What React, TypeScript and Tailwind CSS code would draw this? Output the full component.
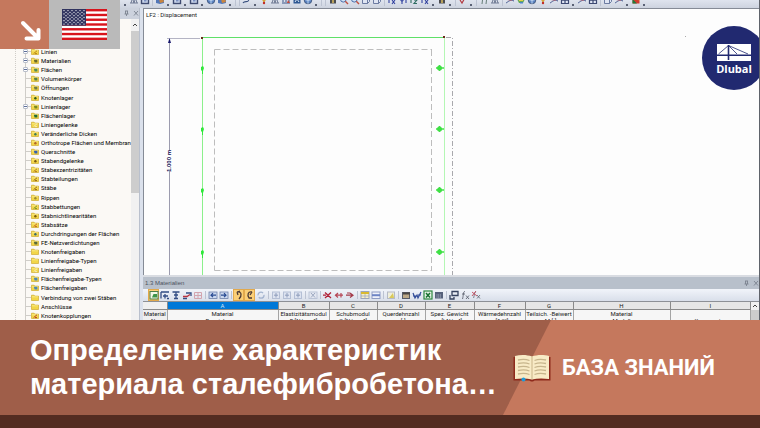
import type { ReactNode } from "react";

type TreeItem = { label: string; mark: string; kind: "dot" | "slash" | "block" | "none"; open?: boolean };

const tree: TreeItem[] = [
  { label: "Linien", mark: "#b07a10", kind: "slash", open: true },
  { label: "Materialien", mark: "#6a6a2a", kind: "block", open: true },
  { label: "Flächen", mark: "#4f8a58", kind: "block", open: true },
  { label: "Volumenkörper", mark: "#55804a", kind: "block" },
  { label: "Öffnungen", mark: "#6c7a4a", kind: "block" },
  { label: "Knotenlager", mark: "#2c5a1c", kind: "dot" },
  { label: "Linienlager", mark: "#7a8a20", kind: "block", open: true },
  { label: "Flächenlager", mark: "#1f6a36", kind: "block" },
  { label: "Liniengelenke", mark: "#f6efc0", kind: "slash" },
  { label: "Veränderliche Dicken", mark: "#3e7a5a", kind: "dot" },
  { label: "Orthotrope Flächen und Membran", mark: "#b0642a", kind: "dot" },
  { label: "Querschnitte", mark: "#3560b0", kind: "block" },
  { label: "Stabendgelenke", mark: "#7a5a10", kind: "dot" },
  { label: "Stabexzentrizitäten", mark: "#a8701c", kind: "slash" },
  { label: "Stabteilungen", mark: "#8a5a10", kind: "slash" },
  { label: "Stäbe", mark: "#8a5a10", kind: "slash" },
  { label: "Rippen", mark: "#9a8a30", kind: "dot" },
  { label: "Stabbettungen", mark: "#6a8a20", kind: "slash" },
  { label: "Stabnichtlinearitäten", mark: "#7a5a10", kind: "dot" },
  { label: "Stabsätze", mark: "#c05a1c", kind: "slash" },
  { label: "Durchdringungen der Flächen", mark: "#3a6a6a", kind: "dot" },
  { label: "FE-Netzverdichtungen", mark: "#5a6a3a", kind: "block" },
  { label: "Knotenfreigaben", mark: "", kind: "none" },
  { label: "Linienfreigabe-Typen", mark: "", kind: "none" },
  { label: "Linienfreigaben", mark: "#f6efc0", kind: "slash" },
  { label: "Flächenfreigabe-Typen", mark: "#4a86b8", kind: "block" },
  { label: "Flächenfreigaben", mark: "#4a86b8", kind: "block" },
  { label: "Verbindung von zwei Stäben", mark: "", kind: "none" },
  { label: "Anschlüsse", mark: "", kind: "none" },
  { label: "Knotenkopplungen", mark: "#b0301c", kind: "slash" },
];

function Folder({ item }: { item: TreeItem }) {
  return (
    <svg viewBox="0 0 8 7" className="h-[7px] w-[8px] shrink-0" aria-hidden="true">
      <path d="M.5 1.2h2.6l.8.9h3.6v4.4h-7z" fill="#f2d648" stroke="#c9a21e" strokeWidth=".6" />
      <path d="M1 2.8h6" stroke="#fff3a0" strokeWidth=".7" />
      {item.kind === "dot" && <circle cx="4.4" cy="4.2" r="1.2" fill={item.mark} />}
      {item.kind === "block" && <path d="M2.8 2.7h3.6v2.9H3.6z" fill={item.mark} />}
      {item.kind === "slash" && <path d="M2.6 5.6 6 2.8M4 5.6h2" stroke={item.mark} strokeWidth=".9" />}
    </svg>
  );
}

const glyphs: Record<string, ReactNode> = {
  layers: (
    <>
      <path d="M1 5l4-3 4 2v4l-4 1-4-1z" fill="#5277b8" />
      <path d="M4 4h4l1 3-4 1z" fill="#c9853f" />
    </>
  ),
  frame: (
    <>
      <rect x="1.5" y="1.5" width="7" height="7" fill="#c9d4ea" stroke="#3e4a70" strokeWidth="1.4" />
      <rect x="4" y="4" width="2.5" height="2.5" fill="#7b8fc0" />
    </>
  ),
  globe: (
    <>
      <circle cx="5" cy="5" r="3.8" fill="#5d85c4" stroke="#34496f" strokeWidth=".8" />
      <path d="M2 4.5c2 1 4 1 6 0M5 1.2v7.6" stroke="#d2e4f8" strokeWidth=".8" fill="none" />
    </>
  ),
  curve: <path d="M1 8c2-3 6 1 6-5M7 2v3" stroke="#38507e" strokeWidth="1.2" fill="none" />,
  pin: (
    <>
      <path d="M2 3h6L5 8z" fill="#d6a63c" />
      <circle cx="5" cy="8" r="1.2" fill="#c02a25" />
    </>
  ),
  truss: <path d="M1 8h8M2 8l1.5-5L5 8l1.5-5L8 8M3.5 3h3" stroke="#68738d" strokeWidth=".9" fill="none" />,
  load: (
    <>
      <path d="M1 8h8M2 2v5M5 2v5M8 2v5" stroke="#3d5789" strokeWidth="1" />
      <path d="M7 5l2 3H6z" fill="#c44a3d" />
    </>
  ),
  solid: (
    <>
      <rect x="1.5" y="2" width="7" height="6.5" fill="#2f5893" />
      <path d="M3 7l2-3 2 3" stroke="#e2edf8" fill="none" />
    </>
  ),
  zoom: (
    <>
      <circle cx="4.3" cy="4.3" r="2.8" fill="#cfe0f3" stroke="#4a6fab" strokeWidth="1" />
      <path d="M6.3 6.3 9 9" stroke="#c05040" strokeWidth="1.4" />
    </>
  ),
  cube: <path d="M1.5 3.5h5v5h-5zM1.5 3.5 3.5 1.5h5v5l-2 2M6.5 3.5l2-2" fill="#dfe5f3" stroke="#5f6f98" strokeWidth=".9" />,
  axisX: <path d="M2 1v7M5 5l3 4M8 5 5 9" stroke="#3444a0" strokeWidth="1.1" />,
  axisY: <path d="M2 4l2 2.5L6 4M4 6.5V9M8 1v7" stroke="#3444a0" strokeWidth="1.1" fill="none" />,
  axisZ: <path d="M2 1v7M5 5h3L5 8.5h3" stroke="#2f6d62" strokeWidth="1.1" fill="none" />,
  person: (
    <>
      <path d="M2 8.5V4l3-2 3 2v4.5z" fill="#4a4c50" />
      <path d="M4 8h2V5H4z" fill="#b7a05b" />
    </>
  ),
  check: <path d="M2 5l2 3 4-7" stroke="#b23b42" strokeWidth="1.2" fill="none" />,
  bars: <path d="M3 9 4 1M7 9 8 1" stroke="#667d78" strokeWidth="1" />,
  result: (
    <>
      <path d="M1 8c2-1 4-4 8-2" stroke="#40548c" fill="none" />
      <path d="M2 5l3-3 2 4z" fill="#c5646a" opacity=".8" />
    </>
  ),
  rainbow: (
    <>
      <path d="M1 4c2-3 6-3 8 0L7 8H3z" fill="#64aa5a" />
      <path d="M3 4h4v2H3z" fill="#e7cf4e" />
      <path d="M4 7h3v1.5H4z" fill="#4e84c8" />
    </>
  ),
  mesh: <path d="M1.5 2h7v6.5h-7zM5 2v6.5M1.5 5.2h7" fill="#dfe5f3" stroke="#3d4972" strokeWidth="1.2" />,
  colour: (
    <>
      <path d="M1.5 1.5h7v7h-7z" fill="#d23b2e" />
      <path d="M1.5 4l4.5 4.5H1.5z" fill="#1f7c3b" />
      <path d="M5 2h3.5v4z" fill="#f0d23a" />
    </>
  ),
  sheet: (
    <>
      <rect x="1" y="1.5" width="8" height="7.5" fill="#f3f8e8" stroke="#4b7f49" />
      <path d="M3 7.5 4.5 4H8v3.5z" fill="#3d9549" />
    </>
  ),
  tableNew: <path d="M1 2h8M1 2v6.5M5 4v4.5M3 6h5M7 8.5h2" stroke="#334d84" strokeWidth="1.3" fill="none" />,
  tableCol: <path d="M1.5 2h7M5 2v6.5M3 8.5h4M3 5h4" stroke="#334d84" strokeWidth="1.3" fill="none" />,
  tableRed: (
    <>
      <path d="M4 3h5v3M1 8.5h4" stroke="#334d84" strokeWidth="1.3" fill="none" />
      <path d="M1 6.5h4l3-2" stroke="#b8323f" strokeWidth="1.3" fill="none" />
    </>
  ),
  tableFaded: <path d="M1.5 2.5h7v6h-7zM5 2.5v6M1.5 5.5h7" stroke="#d3a4ae" fill="none" />,
  left: (
    <>
      <rect x="1" y="2" width="8" height="6.5" fill="#cbd8ee" stroke="#6d80aa" strokeWidth=".8" />
      <path d="M8 5.2H3M5 3.2l-2 2 2 2" stroke="#294b92" strokeWidth="1.2" fill="none" />
    </>
  ),
  right: (
    <>
      <rect x="1" y="2" width="8" height="6.5" fill="#cbd8ee" stroke="#6d80aa" strokeWidth=".8" />
      <path d="M2 5.2h5M5 3.2l2 2-2 2" stroke="#294b92" strokeWidth="1.2" fill="none" />
    </>
  ),
  undo: <path d="M3 2c5-1 5 4 2 7M3 2l1 3M3 2l3-1" stroke="#4c3a35" strokeWidth="1.3" fill="none" />,
  redo: <path d="M7 2C3 1 2 5 4 8h3M7 2 5 5" stroke="#4c3a35" strokeWidth="1.3" fill="none" />,
  cycle: <circle cx="5" cy="5.2" r="3" fill="none" stroke="#a4b4cf" strokeWidth="1.3" strokeDasharray="7 2" />,
  faded: (
    <>
      <rect x="1.5" y="2" width="7" height="6.5" fill="#dde3f0" stroke="#b4bfd5" />
      <path d="M5 3v4.5M3 5.2h4" stroke="#8f9dbb" />
    </>
  ),
  fadedX: (
    <>
      <rect x="1" y="2" width="8" height="6.5" fill="#e3e7f1" stroke="#bcc5d8" />
      <path d="M3 3l4 4.5M7 3 3 7.5" stroke="#9ca8c0" />
    </>
  ),
  cut: <path d="M2 2.5l6 5.5M8 2.5 2 8M0 5.2h3" stroke="#b01f35" strokeWidth="1.3" />,
  rowOut: <path d="M1 5.2h8M4 3 1.5 5.2 4 7.5M7 3v4.5" stroke="#b64655" strokeWidth="1.2" fill="none" />,
  rowIn: <path d="M1 5.2h6M5 3l3 2.2L5 7.5M2 3h3" stroke="#a33948" strokeWidth="1.2" fill="none" />,
  yellowTable: (
    <>
      <rect x="1" y="1.5" width="8" height="7" fill="#f5efcb" stroke="#9ca5bb" />
      <path d="M1 3h8" stroke="#d9b930" strokeWidth="2" />
      <path d="M5 4v4.5M1 6h8" stroke="#9ca5bb" strokeWidth=".7" />
    </>
  ),
  blueTable: (
    <>
      <rect x="1" y="2" width="8" height="6.5" fill="#eef1fa" stroke="#8f9cc4" />
      <path d="M1 5.2h8" stroke="#6d84c5" strokeWidth="2" />
    </>
  ),
  note: (
    <>
      <rect x="1.5" y="2" width="7" height="6.5" fill="#eeeedc" stroke="#b5bac5" />
      <path d="M3 8l4-5 1 5z" fill="#d9c95a" />
    </>
  ),
  edit: (
    <>
      <rect x="1.5" y="2.5" width="7" height="6" fill="#bba887" stroke="#555b68" />
      <path d="M2 2.5h7v2H2z" fill="#4a4744" />
    </>
  ),
  glasses: <path d="M1 3l2 5 2-3 1 3 3-6M1 6h3M6 5h3" stroke="#304b99" strokeWidth="1.2" fill="none" />,
  excel: (
    <>
      <rect x="1" y="1" width="8" height="8" fill="#e6f3e5" stroke="#2c8740" strokeWidth="1.2" />
      <path d="M3 3l4 4.5M7 3 3 7.5" stroke="#16702f" strokeWidth="1.5" />
    </>
  ),
  calc: (
    <>
      <rect x="1" y="2" width="8" height="6.5" fill="#56617b" />
      <path d="M2.5 5h5M2.5 7h5" stroke="#cbd3e3" strokeWidth=".8" strokeDasharray="1 .7" />
    </>
  ),
  link: <path d="M3 1.5h6v4H3zM1 5v4h4V7" stroke="#35415e" strokeWidth="1.3" fill="none" />,
  fx: <path d="M5 1.5C3 1 3.5 6 2.5 9M2 4h3M6 5.5l3 3.5M9 5.5 6 9" stroke="#5d6370" strokeWidth=".9" fill="none" />,
  fxRed: (
    <>
      <path d="M5 2C3 1.5 3.5 6 2.5 8M6 5l3 3.5M9 5 6 8.5" stroke="#5d6370" strokeWidth=".8" fill="none" />
      <path d="M1 2l5 4M5 1 1 6" stroke="#c34a5b" strokeWidth=".9" />
    </>
  ),
};

function ToolButton({ name, active }: { name: string; active?: boolean }) {
  return (
    <button
      type="button"
      aria-label={name}
      className={
        active
          ? "flex h-[12px] w-[11px] shrink-0 items-center justify-center border border-[#e2a94c] bg-[#fbcf77]"
          : "flex h-[12px] w-[11px] shrink-0 items-center justify-center"
      }
    >
      <svg viewBox="0 0 10 10" className="size-[10px] shrink-0" aria-hidden="true">
        {glyphs[name]}
      </svg>
    </button>
  );
}

// "v" is a drop-down caret, "|" a group separator and a leading "*" marks a pressed button.
function Tools({ items }: { items: string }) {
  return (
    <>
      {items.split(" ").map((name, i) => {
        if (name === "v")
          return (
            <span key={i} className="flex w-[6px] shrink-0 justify-center">
              <span className="size-[2px] bg-[#5b6275]" />
            </span>
          );
        if (name === "|")
          return (
            <span key={i} className="flex w-[4px] shrink-0 justify-center">
              <span className="h-[8px] w-px bg-[#bcc3d2]" />
            </span>
          );
        return <ToolButton key={i} name={name.replace("*", "")} active={name.startsWith("*")} />;
      })}
    </>
  );
}

function PinClose() {
  return (
    <svg viewBox="0 0 16 7" className="h-[7px] w-[16px]" aria-hidden="true">
      <path d="M2 1h3M2.5 1v3M4.5 1v3M1.5 4h4M3.5 4v2M11 1l4 4.5M15 1l-4 4.5" stroke="#7b828f" strokeWidth=".9" fill="none" />
    </svg>
  );
}

function Sidebar() {
  return (
    <aside className="flex w-[139px] shrink-0 flex-col overflow-hidden bg-[#fbf9f5]">
      <div className="flex h-[11px] shrink-0 items-center justify-end bg-[#ccd2dd]">
        <PinClose />
      </div>
      <div className="flex min-h-0 flex-1">
        <div className="flex min-w-0 flex-1 overflow-hidden pt-[28px]">
          <div className="ml-[15px] w-[10px] shrink-0 border-l border-dotted border-[#cfcdc8]" />
          <ul className="flex min-w-0 flex-1 flex-col border-l border-[#cfcdc8]">
            {tree.map((item) => (
              <li key={item.label} className="relative flex min-h-0 flex-1 items-center">
                <span className="h-px w-[5px] shrink-0 bg-[#cfcdc8]" />
                {item.open && (
                  <button
                    type="button"
                    aria-label={`${item.label} +`}
                    className="absolute -left-[3px] flex size-[5px] items-center justify-center rounded-[1px] border border-[#b9bfca] bg-white"
                  >
                    <span className="h-px w-[3px] bg-[#5b6e9b]" />
                  </button>
                )}
                <Folder item={item} />
                <span className="ml-[2px] font-['Roboto',sans-serif] text-[6px] leading-[9px] whitespace-nowrap text-black">
                  {item.label}
                </span>
              </li>
            ))}
          </ul>
        </div>
        <div className="flex w-[8px] shrink-0 flex-col items-center bg-[#f1f1f1]">
          <svg viewBox="0 0 8 12" className="h-[12px] w-[8px] shrink-0" aria-hidden="true">
            <path d="M2 7l2-2 2 2" stroke="#444" fill="none" />
          </svg>
          <div className="h-[162px] w-full bg-[#cdcdcd]" />
        </div>
      </div>
    </aside>
  );
}

const supportRows = [68, 129, 190, 252];

function ModelView() {
  return (
    <div className="relative min-h-0 flex-1 overflow-hidden border-t border-l border-[#858b96] bg-[#fdfdfd]">
      <svg className="absolute inset-0 size-full" aria-hidden="true">
        <g transform="translate(-144 -9)" fill="none">
          <path d="M167 38.5h33" stroke="#b4b4c4" />
          <path d="M169.5 40v110M169.5 171v110" stroke="#9c9caf" />
          <path d="M169.5 38l1.5 5h-3z" fill="#14146a" />
          <path d="M202.5 38v250" stroke="#8cf08c" />
          <path d="M202 37.5h242" stroke="#5fe068" />
          <path d="M444.5 38v250" stroke="#b4f7b4" />
          <path d="M446 37.5h6.5v250" stroke="#a9a9ad" strokeDasharray="5 2 1 2" />
          <path d="M214.5 49.5H432M214.5 49.5v221" stroke="#bdbdbd" strokeDasharray="6 3" />
          <path d="M431.5 50v220.5M214.5 270.5H432" stroke="#bdbdbd" strokeDasharray="6 3" />
          <rect x="201" y="37" width="2" height="2" fill="#6b2a1c" />
          <rect x="443" y="36" width="2" height="2" fill="#6b2a1c" />
          <rect x="685" y="36" width="1" height="1" fill="#aaa" />
          {supportRows.map((y) => (
            <g key={y}>
              <path d={`M201 ${y - 1}l2-1 1 2-1 3v3h-1v-3l-1-1z`} fill="#2fe83a" />
              <circle cx="439.5" cy={y} r="2.5" fill="#3fe045" />
              <path d={`M436 ${y}h8M439.5 ${y - 3}v6`} stroke="#3fe045" strokeWidth="1.5" />
            </g>
          ))}
        </g>
      </svg>
      <p className="absolute top-px left-[2px] font-['Roboto',sans-serif] text-[6px] leading-[9px] text-[#222]">
        LF2 : Displacement
      </p>
      <p className="absolute top-[141px] left-[21px] font-['Liberation_Sans',sans-serif] text-[6px] leading-[9px] font-bold text-[#0a0a50] [writing-mode:sideways-lr]">
        1.000 m
      </p>
    </div>
  );
}

const columns = [
  { letter: "A", title: "Material", unit: "Bezeichnung", width: "w-[111px]" },
  { letter: "B", title: "Elastizitätsmodul", unit: "E [N/mm²]", width: "w-[51px]" },
  { letter: "C", title: "Schubmodul", unit: "G [N/mm²]", width: "w-[48px]" },
  { letter: "D", title: "Querdehnzahl", unit: "ν [-]", width: "w-[48px]" },
  { letter: "E", title: "Spez. Gewicht", unit: "γ [kN/m³]", width: "w-[49px]" },
  { letter: "F", title: "Wärmedehnzahl", unit: "α [1/K]", width: "w-[51px]" },
  { letter: "G", title: "Teilsich. -Beiwert", unit: "γM [-]", width: "w-[48px]" },
  { letter: "H", title: "Material", unit: "Modell", width: "w-[97px]" },
  { letter: "I", title: "", unit: "Kommentar", width: "" },
];

function MaterialTable() {
  return (
    <section className="flex h-[45px] shrink-0 flex-col overflow-hidden font-['Roboto',sans-serif]">
      <div className="h-[2px] shrink-0 bg-[#d9dce2]" />
      <div className="flex h-[12px] shrink-0 items-center justify-between bg-[#b8c0cb] pl-[2px]">
        <h2 className="font-['Liberation_Sans',sans-serif] text-[6px] leading-[12px] text-[#4b5260]">1.3 Materialien</h2>
        <PinClose />
      </div>
      <div className="flex h-[12px] shrink-0 items-center bg-linear-to-b from-[#f1f4fa] to-[#d9dfea] pl-[5px]">
        <Tools items="*sheet tableNew tableCol tableRed tableFaded | left right | *undo *redo cycle | faded faded faded | fadedX | cut rowOut rowIn | yellowTable blueTable | note | edit glasses excel calc | link fx fxRed" />
      </div>
      <div className="flex min-h-0 flex-1 border-t-[1px] border-[#8d9096] bg-[#efefef]">
        <div className="min-w-0 flex-1 overflow-hidden">
          <table className="w-full table-fixed border-collapse text-center text-[6px] leading-[7px] text-[#222]">
            <thead>
              <tr className="h-[7px] border-b border-[#8a8a8a]">
                <th className="w-[24px] border-r border-[#8a8a8a] p-0" />
                {columns.map((c) => (
                  <th
                    key={c.letter}
                    scope="col"
                    className={`${c.width} border-r border-[#8a8a8a] p-0 font-normal ${c.letter === "A" ? "bg-[#0078d7] text-[#cfe6fa]" : "bg-[#e6e6e6]"}`}
                  >
                    {c.letter}
                  </th>
                ))}
              </tr>
            </thead>
            <tbody>
              <tr>
                <td className="border-r border-[#a5a5a5] p-0 whitespace-nowrap">
                  Material
                  <br />
                  Nr.
                </td>
                {columns.map((c) => (
                  <td key={c.letter} className="border-r border-[#a5a5a5] bg-[#f6f6f6] p-0 whitespace-nowrap">
                    {c.title || "\u00a0"}
                    <br />
                    {c.unit}
                  </td>
                ))}
              </tr>
            </tbody>
          </table>
        </div>
        <div className="flex w-[8px] shrink-0 flex-col bg-[#f1f1f1]">
          <svg viewBox="0 0 8 8" className="h-[8px] w-[8px] shrink-0" aria-hidden="true">
            <path d="M2 5l2-2 2 2" stroke="#444" fill="none" />
          </svg>
          <div className="flex-1 bg-[#cdcdcd]" />
        </div>
      </div>
    </section>
  );
}

function Flag() {
  return (
    <svg viewBox="0 0 45 31" className="h-[31px] w-[45px]" role="img" aria-label="USA">
      <rect width="45" height="31" fill="#fff" />
      {[0, 1, 2, 3, 4, 5, 6].map((i) => (
        <rect key={i} y={i * 4.77} width="45" height="2.385" fill="#d8141c" />
      ))}
      <rect width="24" height="16.7" fill="#31345f" />
      {Array.from({ length: 9 }, (_, r) =>
        Array.from({ length: r % 2 ? 5 : 6 }, (_, c) => (
          <circle key={`${r}-${c}`} cx={2 + c * 4 + (r % 2 ? 2 : 0)} cy={1.6 + r * 1.68} r=".65" fill="#fff" />
        )),
      )}
    </svg>
  );
}

function CornerBadge() {
  return (
    <div className="absolute top-0 left-0 flex h-[49px]">
      <div className="flex w-[49px] items-end justify-end bg-[#c5785d] p-[8px]">
        <svg viewBox="0 0 22 22" className="size-[22px]" aria-hidden="true">
          <path d="M4 4l15 15M7.5 19.5H19.5V11" stroke="#fff" strokeWidth="4" strokeLinecap="round" strokeLinejoin="round" fill="none" />
        </svg>
      </div>
      <div className="flex w-[71px] justify-center bg-[#bababa] pt-[9px]">
        <Flag />
      </div>
    </div>
  );
}

function DlubalLogo() {
  return (
    <a
      href="#dlubal"
      className="absolute top-[26px] -right-[7px] flex size-[64px] flex-col items-center rounded-full bg-[#212970] pt-[18px] text-white"
    >
      <svg viewBox="0 0 34 17" className="h-[17px] w-[34px] shrink-0" aria-hidden="true">
        <rect width="34" height="17" fill="#fff" />
        <path d="M0 11.3h34" stroke="#212970" strokeWidth="1.6" />
        <path d="M11.5 1v15" stroke="#212970" strokeWidth="1.6" />
        <path d="M11.5 1.5 1.5 10M11.5 1.5 20 10M11.5 1.5 31 10" stroke="#212970" strokeWidth=".8" />
      </svg>
      <span className="font-['Open_Sans',sans-serif] text-[11px] leading-[15px] font-bold">Dlubal</span>
    </a>
  );
}

function BookIcon() {
  return (
    <svg viewBox="0 0 38 28" className="h-[28px] w-[38px] shrink-0" aria-hidden="true">
      <path d="M.5 3h37v23.5H21.5c-1 1.3-4 1.3-5 0H.5z" fill="#8e2a1c" />
      <path d="M2 2c5-1.5 12-1.5 17 .5C24 .5 31 .5 36 2v23c-6-.8-12-.8-17 .5C14 24.2 8 24.2 2 25z" fill="#f8ebc6" />
      <path d="M19 2.5v23" stroke="#c9b488" strokeWidth="1" />
      <path
        d="M5 6c4-1 8-1 11.5.5M5 9.5c4-1 8-1 11.5.5M5 13c4-1 8-1 11.5.5M5 16.5c4-1 8-1 11.5.5M5 20c4-1 8-1 11.5.5M21.5 6.5C25 5 29 5 33 6M21.5 10c3.5-1.5 7.5-1.5 11.5-.5M21.5 13.5c3.5-1.5 7.5-1.5 11.5-.5M21.5 17c3.5-1.5 7.5-1.5 11.5-.5M21.5 20.5c3.5-1.5 7.5-1.5 11.5-.5"
        stroke="#c7b58c"
        strokeWidth="1.3"
        fill="none"
      />
      <circle cx="10.5" cy="25.5" r="2" fill="#1e9bd8" />
    </svg>
  );
}

export default function App() {
  return (
    <div className="flex h-screen flex-col overflow-hidden">
      <main className="relative flex min-h-0 flex-1 flex-col overflow-hidden border-r border-[#5f636b] bg-[#d3d9e5]">
        <div className="flex h-[8px] shrink-0 items-end overflow-hidden bg-linear-to-b from-[#dfe4ee] to-[#cdd3df] pb-[2px] pl-[122px]">
          <Tools items="v truss frame | layers v frame v frame v globe layers v | | curve v pin truss load solid globe v | | person zoom zoom cube cube | axisX axisY axisZ axisX v person v | check v | bars truss | result rainbow globe pin result mesh v result mesh | cube result v colour v" />
        </div>
        <div className="flex min-h-0 flex-1">
          <Sidebar />
          <div className="w-[4px] shrink-0 border-l border-[#b9c0cd] bg-[#dbe1ec]" />
          <div className="flex min-w-0 flex-1 flex-col">
            <ModelView />
            <MaterialTable />
          </div>
        </div>
        <CornerBadge />
        <DlubalLogo />
      </main>
      <footer className="shrink-0 border-b-[13px] border-[#532c21] bg-[#9f5e49] text-white">
        <div className="flex">
          <h1 className="min-w-0 flex-1 pt-[13px] pb-[14px] pl-[30px] font-['Liberation_Sans',Arial,sans-serif] text-[29px] leading-[34px] font-bold whitespace-nowrap">
            Определение характеристик
            <br />
            материала сталефибробетона…
          </h1>
          <div className="relative isolate flex w-[257px] shrink-0 items-center gap-[11px] pl-[10px]">
            <span className="absolute inset-0 -z-10 bg-[#c5785d] [clip-path:polygon(48px_0,100%_0,100%_100%,0_100%)]" />
            <BookIcon />
            <p className="font-['Roboto',sans-serif] text-[22px] leading-[28px] font-bold whitespace-nowrap">БАЗА ЗНАНИЙ</p>
          </div>
        </div>
      </footer>
    </div>
  );
}
